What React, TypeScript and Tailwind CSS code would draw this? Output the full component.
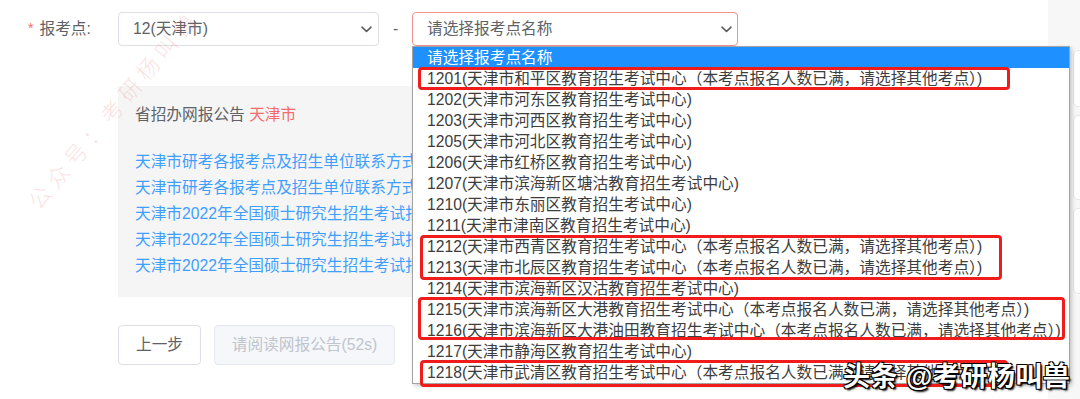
import React from "react";

const FULL = "（本考点报名人数已满，请选择其他考点）)";
const options: string[] = [
  "请选择报考点名称",
  "1201(天津市和平区教育招生考试中心" + FULL,
  "1202(天津市河东区教育招生考试中心)",
  "1203(天津市河西区教育招生考试中心)",
  "1205(天津市河北区教育招生考试中心)",
  "1206(天津市红桥区教育招生考试中心)",
  "1207(天津市滨海新区塘沽教育招生考试中心)",
  "1210(天津市东丽区教育招生考试中心)",
  "1211(天津市津南区教育招生考试中心)",
  "1212(天津市西青区教育招生考试中心" + FULL,
  "1213(天津市北辰区教育招生考试中心" + FULL,
  "1214(天津市滨海新区汉沽教育招生考试中心)",
  "1215(天津市滨海新区大港教育招生考试中心" + FULL,
  "1216(天津市滨海新区大港油田教育招生考试中心" + FULL,
  "1217(天津市静海区教育招生考试中心)",
  "1218(天津市武清区教育招生考试中心" + FULL,
];

const links: string[] = [
  "天津市研考各报考点及招生单位联系方式（一）",
  "天津市研考各报考点及招生单位联系方式（二）",
  "天津市2022年全国硕士研究生招生考试报名公告",
  "天津市2022年全国硕士研究生招生考试报考须知",
  "天津市2022年全国硕士研究生招生考试报名流程",
];

function Chevron() {
  return (
    <svg width="11" height="7" viewBox="0 0 11 7" fill="none">
      <path d="M1 1.2l4.5 4.3L10 1.2" stroke="#5a5a5a" strokeWidth="1.6" strokeLinecap="round" strokeLinejoin="round" />
    </svg>
  );
}

function Watermark({ x, y }: { x: number; y: number }) {
  return (
    <div className="pointer-events-none absolute" style={{ left: x, top: y }}>
      <div className="-translate-x-1/2 -translate-y-1/2 rotate-[-50deg] whitespace-nowrap text-[22px] font-light leading-none tracking-[6px] text-[rgba(235,90,90,0.2)]">
        公众号：考研杨叫兽
      </div>
    </div>
  );
}

export default function App() {
  return (
    <div
      className="relative flex h-[399px] w-[1080px] overflow-hidden bg-white text-[15.7px] text-[#606266]"
      style={{ fontFamily: '"Liberation Sans", "Noto Sans CJK SC", sans-serif' }}
    >
      {/* main column */}
      <div className="w-[1048px] pt-3">
        <div className="flex h-[34px] items-center">
          <div className="flex w-[118px] items-center pl-[28px]">
            <span className="mr-[6px] text-[14px] text-[#f56c6c]">*</span>
            <span>报考点:</span>
          </div>
          <div className="flex h-[34px] w-[261px] items-center justify-between rounded-[4px] border border-[#dcdfe6] pl-[14px] pr-[6px]">
            <span>12(天津市)</span>
            <Chevron />
          </div>
          <span className="w-[33px] text-center">-</span>
          <div className="relative w-[326px]">
            <div className="flex h-[34px] items-center justify-between rounded-[4px] border border-[#f3908c] pl-[14px] pr-[5px]">
              <span>请选择报考点名称</span>
              <Chevron />
            </div>
            {/* native select popup */}
            <div className="absolute left-0 top-full z-10 w-[658px] border border-[#a3a3a3] bg-white text-[#3d3d3d] shadow-[2px_2px_4px_rgba(0,0,0,0.2)]">
              {options.map((o, i) => (
                <div
                  key={i}
                  className={
                    "h-[21px] whitespace-nowrap pl-[14px] leading-[21px] " +
                    (i === 0 ? "bg-[#1e90ff] text-white" : "")
                  }
                >
                  {o}
                </div>
              ))}
              <div className="absolute left-[5px] top-[20px] h-[23px] w-[592px] rounded-[4px] border-[3px] border-[#f01b1b]" />
              <div className="absolute left-[7px] top-[188px] h-[45px] w-[582px] rounded-[4px] border-[3px] border-[#f01b1b]" />
              <div className="absolute left-[5px] top-[250px] h-[43px] w-[647px] rounded-[4px] border-[3px] border-[#f01b1b]" />
              <div className="absolute left-[7px] top-[313px] h-[27px] w-[588px] rounded-[4px] border-[3px] border-[#f01b1b]" />
            </div>
          </div>
        </div>

        <div className="ml-[118px] mt-[40px] h-[211px] w-[620px] overflow-hidden bg-[#f5f5f5] pl-[17px] pt-[18px]">
          <div className="h-[22px] leading-[22px]">
            省招办网报公告 <span className="text-[#f56c6c]">天津市</span>
          </div>
          <div className="mt-[23px] flex flex-col">
            {links.map((l, i) => (
              <div key={i} className="h-[26px] whitespace-nowrap leading-[26px] text-[#409eff]">
                {l}
              </div>
            ))}
          </div>
        </div>

        <div className="ml-[118px] mt-[28px] flex gap-[13px]">
          <div className="flex h-[40px] w-[83px] items-center justify-center rounded-[4px] border border-[#dcdfe6] bg-white">
            上一步
          </div>
          <div className="flex h-[40px] w-[181px] items-center justify-center rounded-[4px] border border-[#e4e7ed] bg-[#f5f7fa] text-[#c0c4cc]">
            请阅读网报公告(52s)
          </div>
        </div>
      </div>

      {/* right strip */}
      <div className="flex w-[32px] flex-col gap-[8px] bg-[#f7f7f7] pl-[25px] pt-[50px]">
        <div className="h-[57px] w-[40px] rounded-[5px] border border-[#e6e6e6] bg-white" />
        <div className="h-[85px] w-[40px] rounded-[5px] border border-[#e6e6e6] bg-white" />
        <div className="h-[86px] w-[40px] rounded-[5px] border border-[#e6e6e6] bg-white" />
      </div>

      {/* watermarks */}
      <Watermark x={115} y={110} />
      <Watermark x={543} y={185} />
      <Watermark x={960} y={280} />

      <div className="pointer-events-none absolute left-[843px] top-[361px] z-20 whitespace-nowrap text-[27px] font-bold leading-[32px] tracking-[0.5px] text-white [text-shadow:1px_1px_0_#000,-1px_-1px_0_#000,1px_-1px_0_#000,-1px_1px_0_#000,2px_2px_2px_#000]">
        头条 @考研杨叫兽
      </div>
    </div>
  );
}
